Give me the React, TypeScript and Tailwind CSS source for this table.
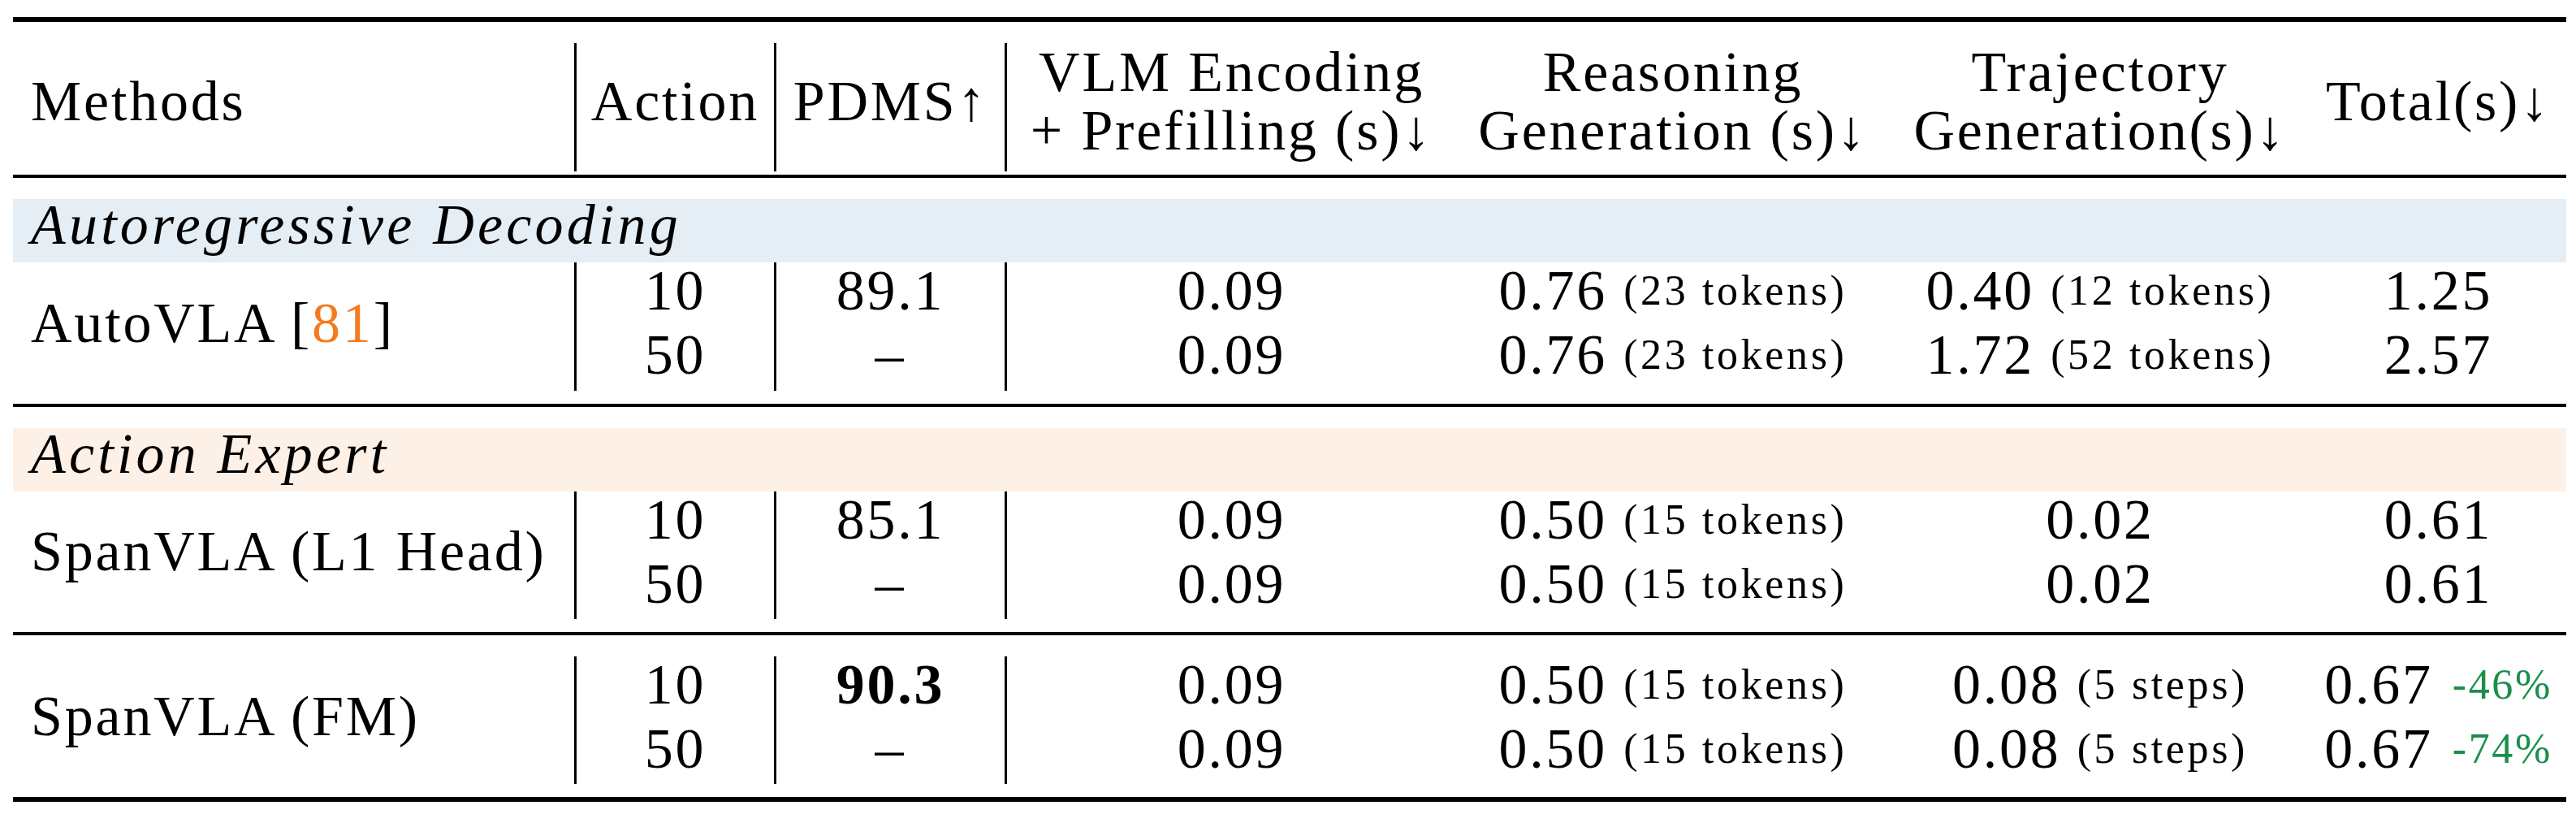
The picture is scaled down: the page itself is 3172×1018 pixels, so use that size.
import React from "react";

type Row = {
  action: string;
  pdms: React.ReactNode;
  vlm: string;
  reason: [string, string];
  traj: [string, string | null];
  total: [string, string | null];
};

const COLS = "grid grid-cols-[691px_246px_284px_556px_534px_518px_315px]";

function Small({ children, green }: { children: React.ReactNode; green?: boolean }) {
  return (
    <span
      className={
        green
          ? "ml-[24px] text-[52px] tracking-[0.05em] text-[#1a8f4a]"
          : "ml-[20px] text-[52px] tracking-[0.07em]"
      }
    >
      {children}
    </span>
  );
}

function Block({
  method,
  rows,
  tall,
}: {
  method: React.ReactNode;
  rows: Row[];
  tall?: boolean;
}) {
  const cell = "flex h-full items-center justify-center pb-[10px] whitespace-nowrap";
  return (
    <div className={`${COLS} ${tall ? "grid-rows-[79px_79px]" : "grid-rows-[79px_78px]"} leading-[79px]`}>
      <div className="row-span-2 flex items-center pl-[22px] pb-[10px] whitespace-nowrap">{method}</div>
      {rows.map((r, i) => (
        <React.Fragment key={i}>
          <div className={`${cell} border-l-[3px] border-black`} style={{ gridColumn: 2, gridRow: i + 1 }}>
            {r.action}
          </div>
          <div className={`${cell} border-l-[3px] border-black`} style={{ gridColumn: 3, gridRow: i + 1 }}>
            {r.pdms}
          </div>
          <div className={`${cell} border-l-[3px] border-black`} style={{ gridColumn: 4, gridRow: i + 1 }}>
            {r.vlm}
          </div>
          <div className={cell} style={{ gridColumn: 5, gridRow: i + 1 }}>
            <span>{r.reason[0]}</span>
            <Small>{r.reason[1]}</Small>
          </div>
          <div className={cell} style={{ gridColumn: 6, gridRow: i + 1 }}>
            <span>{r.traj[0]}</span>
            {r.traj[1] && <Small>{r.traj[1]}</Small>}
          </div>
          <div className={cell} style={{ gridColumn: 7, gridRow: i + 1 }}>
            <span>{r.total[0]}</span>
            {r.total[1] && <Small green>{r.total[1]}</Small>}
          </div>
        </React.Fragment>
      ))}
    </div>
  );
}

function Band({ label, color }: { label: string; color: string }) {
  return (
    <div className={`flex h-[78px] items-center pl-[22px] pb-[14px] italic tracking-[0.06em] leading-[78px] ${color}`}>
      {label}
    </div>
  );
}

export default function App() {
  const head = "flex h-full flex-col items-center justify-center pb-[14px] leading-[72px] whitespace-nowrap";
  return (
    <div className="min-h-[1018px] w-[3172px] bg-white pl-[16px] pt-[21px] font-['Liberation_Serif','DejaVu_Serif',serif] text-[70px] tracking-[0.04em] text-black">
      <div className="w-[3144px]">
        <div className="h-[6px] bg-black" />
        <div className="pt-[26px] pb-[16px]">
          <div className={`${COLS} h-[146px]`}>
            <div className="flex h-full items-center pl-[22px] pb-[14px] leading-[72px]">Methods</div>
            <div className={`${head} border-l-[3px] border-black`}>Action</div>
            <div className={`${head} border-l-[3px] border-black`}>PDMS↑</div>
            <div className={`${head} border-l-[3px] border-black`}>
              <span>VLM Encoding</span>
              <span>+ Prefilling (s)↓</span>
            </div>
            <div className={head}>
              <span>Reasoning</span>
              <span>Generation (s)↓</span>
            </div>
            <div className={head}>
              <span>Trajectory</span>
              <span>Generation(s)↓</span>
            </div>
            <div className={head}>Total(s)↓</div>
          </div>
        </div>
        <div className="h-[4px] bg-black" />

        <div className="mt-[26px]">
          <Band label="Autoregressive Decoding" color="bg-[#e5edf5]" />
        </div>
        <Block
          tall
          method={
            <span>
              AutoVLA [<span className="text-[#f47a20]">81</span>]
            </span>
          }
          rows={[
            { action: "10", pdms: "89.1", vlm: "0.09", reason: ["0.76", "(23 tokens)"], traj: ["0.40", "(12 tokens)"], total: ["1.25", null] },
            { action: "50", pdms: "–", vlm: "0.09", reason: ["0.76", "(23 tokens)"], traj: ["1.72", "(52 tokens)"], total: ["2.57", null] },
          ]}
        />
        <div className="mt-[16px] h-[4px] bg-black" />

        <div className="mt-[26px]">
          <Band label="Action Expert" color="bg-[#fdf0e7]" />
        </div>
        <Block
          method={<span>SpanVLA (L1 Head)</span>}
          rows={[
            { action: "10", pdms: "85.1", vlm: "0.09", reason: ["0.50", "(15 tokens)"], traj: ["0.02", null], total: ["0.61", null] },
            { action: "50", pdms: "–", vlm: "0.09", reason: ["0.50", "(15 tokens)"], traj: ["0.02", null], total: ["0.61", null] },
          ]}
        />
        <div className="mt-[16px] h-[4px] bg-black" />

        <div className="mt-[26px]">
          <Block
            method={<span>SpanVLA (FM)</span>}
            rows={[
              { action: "10", pdms: <span className="font-bold">90.3</span>, vlm: "0.09", reason: ["0.50", "(15 tokens)"], traj: ["0.08", "(5 steps)"], total: ["0.67", "-46%"] },
              { action: "50", pdms: "–", vlm: "0.09", reason: ["0.50", "(15 tokens)"], traj: ["0.08", "(5 steps)"], total: ["0.67", "-74%"] },
            ]}
          />
        </div>
        <div className="mt-[16px] h-[6px] bg-black" />
      </div>
    </div>
  );
}
